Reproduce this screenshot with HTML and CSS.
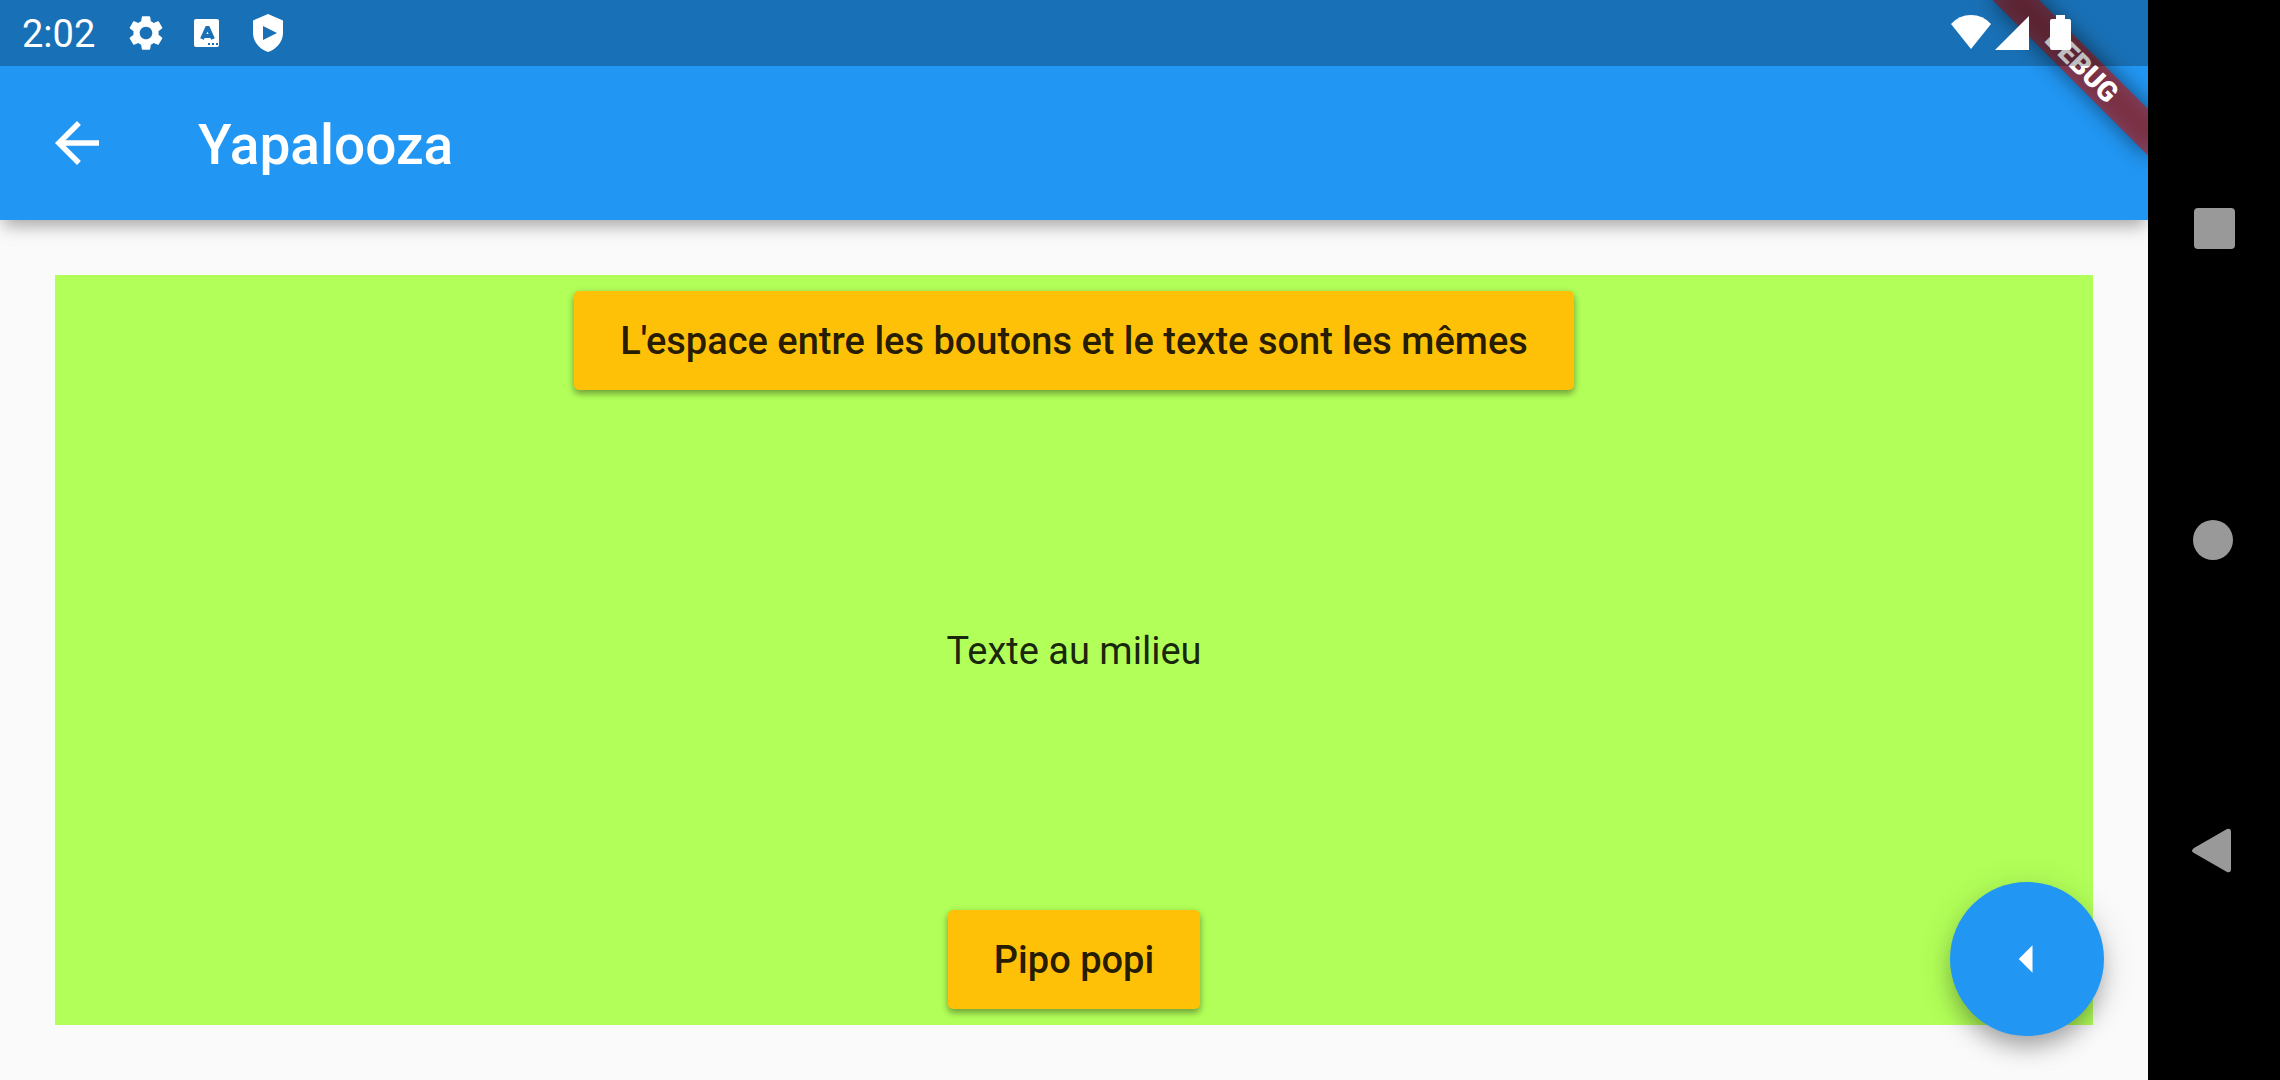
FILE: index.html
```html
<!DOCTYPE html>
<html lang="fr">
<head>
<meta charset="utf-8">
<meta name="viewport" content="width=device-width, initial-scale=1">
<title>Yapalooza</title>
<link rel="stylesheet" href="styles.css">
</head>
<body>
<div class="app">
  <header class="app-bar">
    <button class="icon-button" type="button" aria-label="Retour">
      <svg class="icon" viewBox="0 0 24 24" aria-hidden="true"><path d="M20 11H7.83l5.59-5.59L12 4l-8 8 8 8 1.41-1.41L7.83 13H20v-2z"/></svg>
    </button>
    <h1 class="title">Yapalooza</h1>
  </header>
  <main class="content">
    <div class="panel">
      <button class="raised-button" type="button">L'espace entre les boutons et le texte sont les mêmes</button>
      <p class="middle-text">Texte au milieu</p>
      <button class="raised-button" type="button">Pipo popi</button>
    </div>
  </main>
  <button class="fab" type="button" aria-label="Précédent">
    <svg class="icon" viewBox="0 0 24 24" aria-hidden="true"><path d="M14 7l-5 5 5 5V7z"/></svg>
  </button>
  <div class="banner"><span class="banner-label">DEBUG</span></div>
  <div class="status-bar">
    <span class="clock">2:02</span>
    <div class="status-group notifications">
      <svg class="status-icon" viewBox="0 0 24 24" aria-hidden="true"><path d="M19.14 12.94c.04-.3.06-.61.06-.94 0-.32-.02-.64-.07-.94l2.03-1.58c.18-.14.23-.41.12-.61l-1.92-3.32c-.12-.22-.37-.29-.59-.22l-2.39.96c-.5-.38-1.03-.7-1.62-.94l-.36-2.54c-.04-.24-.24-.41-.48-.41h-3.84c-.24 0-.43.17-.47.41l-.36 2.54c-.59.24-1.13.57-1.62.94l-2.39-.96c-.22-.08-.47 0-.59.22L2.74 8.87c-.12.21-.08.47.12.61l2.03 1.58c-.05.3-.09.63-.09.94s.02.64.07.94l-2.03 1.58c-.18.14-.23.41-.12.61l1.92 3.32c.12.22.37.29.59.22l2.39-.96c.5.38 1.03.7 1.62.94l.36 2.54c.05.24.24.41.48.41h3.84c.24 0 .44-.17.47-.41l.36-2.54c.59-.24 1.13-.56 1.62-.94l2.39.96c.22.08.47 0 .59-.22l1.92-3.32c.12-.22.07-.47-.12-.61l-2.01-1.58zM12 15.6c-1.98 0-3.6-1.62-3.6-3.6s1.62-3.6 3.6-3.6 3.6 1.62 3.6 3.6-1.62 3.6-3.6 3.6z"/></svg>
      <svg class="status-icon" viewBox="0 0 42 42" aria-hidden="true">
        <path d="M11 7h20a2 2 0 0 1 2 2v24a2 2 0 0 1-2 2H10a2 2 0 0 1-2-2V9a2 2 0 0 1 2-2z"/>
        <path class="cut-line" d="M16 27l5-11h1l5 11M18 24h7"/>
        <path class="cut" d="M22 31h2v2h-2zM26 31h2v2h-2zM30 31h2v2h-2z"/>
      </svg>
      <svg class="status-icon" viewBox="0 0 42 42" aria-hidden="true">
        <path d="M21 2l15 6.500v12.500c0 8-6 16-15 19-9-3-15-11-15-19V8.500z"/>
        <path class="cut" d="M16 14l14 7-14 7z"/>
      </svg>
    </div>
    <div class="status-group">
      <svg class="status-icon" viewBox="0 0 42 42" aria-hidden="true"><path d="M21 37L1 12Q9 3 21 3t20 9z"/></svg>
      <svg class="status-icon" viewBox="0 0 42 42" aria-hidden="true"><path d="M37 4v34H3z"/></svg>
      <svg class="status-icon battery" viewBox="0 0 42 42" aria-hidden="true"><path d="M17 3h9v4h4q2 0 2 2v27q0 2-2 2H13q-2 0-2-2V9q0-2 2-2h4z"/></svg>
    </div>
  </div>
</div>
<nav class="system-nav" aria-label="Navigation">
  <button class="nav-button" type="button" aria-label="Applications"><svg class="nav-icon" viewBox="0 0 44 44" aria-hidden="true"><rect x="2" y="2" width="41" height="41" rx="4"/></svg></button>
  <button class="nav-button" type="button" aria-label="Accueil"><svg class="nav-icon" viewBox="0 0 44 44" aria-hidden="true"><circle cx="21" cy="22" r="20"/></svg></button>
  <button class="nav-button" type="button" aria-label="Retour système"><svg class="nav-icon" viewBox="0 0 44 44" aria-hidden="true"><path d="M2 18L35-1q4-1 4 3v37q0 4-4 3L2 23q-4-2 0-5z"/></svg></button>
</nav>
</body>
</html>
```
FILE: styles.css
```css
* {
  box-sizing: border-box;
}

body {
  margin: 0;
  min-height: 100vh;
  display: flex;
  background: #000;
  font-family: Roboto, "Liberation Sans", sans-serif;
}

button {
  margin: 0;
  padding: 0;
  border: 0;
  background: none;
  font: inherit;
  color: inherit;
  cursor: pointer;
}

svg {
  display: block;
  fill: currentColor;
  overflow: visible;
}

.app {
  position: relative;
  flex: 1;
  min-width: 0;
  display: flex;
  flex-direction: column;
  overflow: hidden;
  background: #fafafa;
}

.app-bar {
  display: flex;
  align-items: center;
  gap: 88px;
  min-height: 220px;
  padding: 66px 44px 0;
  background: #2196f3;
  color: #fff;
  box-shadow: 0 10px 14px -4px rgba(0, 0, 0, 0.24), 0 4px 24px rgba(0, 0, 0, 0.12);
}

.icon {
  width: 66px;
  height: 66px;
}

.title {
  margin: 0;
  padding-top: 3px;
  font-size: 55px;
  font-weight: 500;
  line-height: 64px;
}

.content {
  flex: 1;
  display: flex;
  padding: 55px;
}

.panel {
  flex: 1;
  display: flex;
  flex-direction: column;
  align-items: center;
  justify-content: space-between;
  padding: 16px;
  background: #b2ff59;
  color: rgba(0, 0, 0, 0.87);
  font-size: 38px;
  line-height: 45px;
}

.raised-button {
  padding: 28px 46px 26px;
  border-radius: 5px;
  background: #ffc107;
  font-weight: 500;
  box-shadow: 0 4px 6px rgba(0, 0, 0, 0.28), 0 2px 8px rgba(0, 0, 0, 0.14);
}

.middle-text {
  margin: 0;
  padding-top: 2px;
}

.fab {
  position: absolute;
  right: 44px;
  bottom: 44px;
  width: 154px;
  height: 154px;
  display: grid;
  place-items: center;
  border-radius: 50%;
  background: #2196f3;
  color: #fff;
  box-shadow: 0 14px 22px -4px rgba(0, 0, 0, 0.28), 0 6px 36px rgba(0, 0, 0, 0.14);
}

/* Corner ribbon, turned around the top right corner of the app */
.banner {
  position: absolute;
  top: 77px;
  right: -110px;
  width: 220px;
  height: 33px;
  transform: rotate(45deg);
  transform-origin: 110px -77px;
}

.banner::before {
  content: "";
  position: absolute;
  inset: 0;
  z-index: -1;
  background: rgba(0, 0, 0, 0.5);
  filter: blur(11px);
}

.banner-label {
  display: block;
  background: rgba(183, 28, 28, 0.63);
  color: #fff;
  font-size: 28px;
  font-weight: 900;
  line-height: 33px;
  text-align: center;
}

.status-bar {
  position: absolute;
  top: 0;
  left: 0;
  right: 0;
  height: 66px;
  display: flex;
  align-items: center;
  padding: 0 67px 0 22px;
  background: rgba(0, 0, 0, 0.25);
  color: #fff;
}

.clock {
  padding-top: 3px;
  font-size: 38px;
  line-height: 45px;
}

.status-group {
  display: flex;
}

.notifications {
  gap: 19px;
  margin-left: 30px;
  margin-right: auto;
}

.status-icon {
  width: 42px;
  height: 42px;
}

.battery {
  margin-left: 5px;
}

.cut {
  fill: #1970b6;
}

.cut-line {
  fill: none;
  stroke: #1970b6;
  stroke-width: 4;
}

.system-nav {
  width: 132px;
  display: flex;
  flex-direction: column;
  align-items: center;
  justify-content: space-around;
  padding: 72px 0;
  color: #999;
}

.nav-icon {
  width: 44px;
  height: 44px;
}
```
